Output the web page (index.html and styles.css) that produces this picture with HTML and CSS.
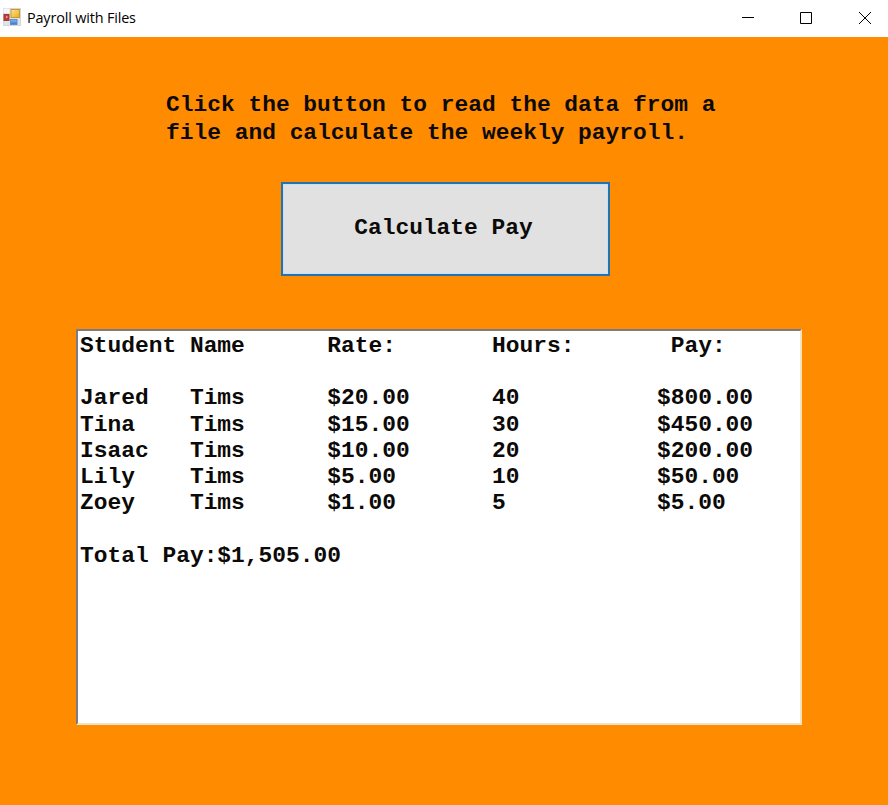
FILE: index.html
```html
<!DOCTYPE html>
<html lang="en">
<head>
<meta charset="utf-8">
<title>Payroll with Files</title>
<link rel="stylesheet" href="styles.css">
</head>
<body>
<div class="window">
<header class="titlebar">
<svg class="app-icon" width="18" height="18" viewBox="0 0 18 18">
<defs>
<linearGradient id="gold" x1="0" y1="0" x2="1" y2="1"><stop offset="0" stop-color="#ffe58a"/><stop offset="1" stop-color="#eda915"/></linearGradient>
<linearGradient id="blue" x1="0" y1="0" x2="0" y2="1"><stop offset="0" stop-color="#8dbcf0"/><stop offset="1" stop-color="#3a74c4"/></linearGradient>
</defs>
<rect x="0.500" y="0.500" width="17" height="17" fill="#e2e3e4" stroke="#d3d6da"/>
<rect x="0.500" y="0.500" width="6" height="4.500" fill="#f7f7f7"/>
<rect x="8" y="1.500" width="8.500" height="8" fill="url(#gold)" stroke="#c29a3c"/>
<rect x="1" y="6.500" width="5" height="6" fill="#c43b38" stroke="#98403c"/>
<rect x="3" y="8" width="1.500" height="2" fill="#ee9a92"/>
<rect x="7.500" y="11.500" width="6.500" height="5" fill="url(#blue)" stroke="#5d8fd0"/>
</svg>
<span class="title">Payroll with Files</span>
<div class="controls">
<svg width="14" height="14" viewBox="0 0 14 14"><path d="M1 6.500H13"/></svg>
<svg width="14" height="14" viewBox="0 0 14 14"><path d="M1.500 1.500H12.500V12.500H1.500Z"/></svg>
<svg width="14" height="14" viewBox="0 0 14 14"><path d="M1 1L13 13M13 1L1 13"/></svg>
</div>
</header>
<main class="form">
<p class="prompt">Click the button to read the data from a
file and calculate the weekly payroll.</p>
<button class="calculate">Calculate Pay</button>
<pre class="output">Student Name      Rate:       Hours:       Pay:

Jared   Tims      $20.00      40          $800.00
Tina    Tims      $15.00      30          $450.00
Isaac   Tims      $10.00      20          $200.00
Lily    Tims      $5.00       10          $50.00
Zoey    Tims      $1.00       5           $5.00

Total Pay:$1,505.00</pre>
</main>
</div>
</body>
</html>
```
FILE: styles.css
```css
* { box-sizing: border-box; }
body { margin: 0; }
.window { width: 888px; height: 805px; display: flex; flex-direction: column; background: #ff8c00; overflow: hidden; }
.titlebar { height: 37px; background: #fff; display: flex; align-items: center; padding: 0 16px 2px 3px; }
.app-icon { margin-top: -2px; }
.title { margin-left: 6px; font: 14.4px "Open Sans", sans-serif; letter-spacing: -0.15px; color: #000; }
.controls { margin-left: auto; display: flex; gap: 45px; }
.controls svg { fill: none; stroke: #000; stroke-width: 1; }
.controls svg:first-child { margin-right: -1px; }
.form { flex: 1; display: flex; flex-direction: column; font: bold 22.9px/28px "Liberation Mono", monospace; color: #0c0a08; }
.prompt { margin: 54px 0 0 166px; white-space: pre; }
.calculate { width: 329px; height: 94px; margin: 35px 0 0 281px; padding: 0 4px 2px 0; background: #e1e1e1; border: 2px solid #1f74b4; box-shadow: inset 0 0 0 1px #c9dff0; font: inherit; color: #0c0a08; }
.output { width: 726px; height: 396px; margin: 53px 0 0 76px; padding: 2px 0 0 2px; background: #fff; border: 2px solid; border-color: #7c7c80 #f3e3c0 #f3e3c0 #7c7c80; font: inherit; line-height: 26.2px; }
```
